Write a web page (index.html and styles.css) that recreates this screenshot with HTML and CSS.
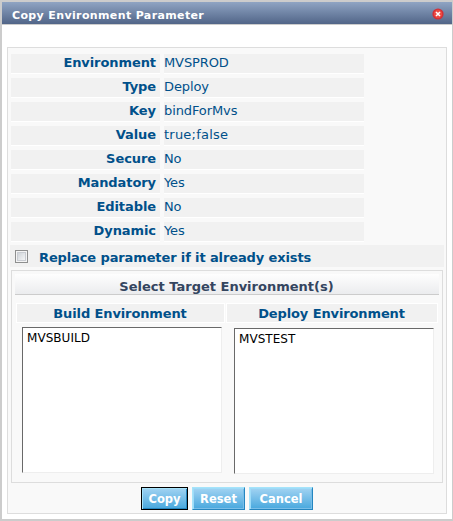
FILE: index.html
```html
<!DOCTYPE html>
<html lang="en">
<head>
<meta charset="utf-8">
<title>Copy Environment Parameter</title>
<link rel="stylesheet" href="styles.css">
</head>
<body>
<div class="window">
  <div class="titlebar">
    <span class="title">Copy Environment Parameter</span>
    <svg class="close" width="12" height="12" viewBox="0 0 12 12"><circle cx="6" cy="6" r="5.6" fill="#d03038"/><circle cx="6" cy="6" r="4.2" fill="#ee4840"/><path d="M4 4l4 4M8 4l-4 4" stroke="#fff" stroke-width="1.6"/></svg>
  </div>
  <form class="panel">
    <dl class="params">
      <dt>Environment</dt><dd>MVSPROD</dd>
      <dt>Type</dt><dd>Deploy</dd>
      <dt>Key</dt><dd>bindForMvs</dd>
      <dt>Value</dt><dd class="wide">true;false</dd>
      <dt>Secure</dt><dd>No</dd>
      <dt>Mandatory</dt><dd>Yes</dd>
      <dt>Editable</dt><dd>No</dd>
      <dt>Dynamic</dt><dd>Yes</dd>
    </dl>
    <label class="replace"><input type="checkbox" class="check"><span>Replace parameter if it already exists</span></label>
    <section class="targets">
      <h2 class="heading"><span>Select Target Environment(s)</span></h2>
      <div class="columns">
        <div class="column build">
          <h3><span>Build Environment</span></h3>
          <div class="list"><span>MVSBUILD</span></div>
        </div>
        <div class="column deploy">
          <h3><span>Deploy Environment</span></h3>
          <div class="list"><span>MVSTEST</span></div>
        </div>
      </div>
    </section>
    <div class="buttons">
      <button type="button" class="btn copy"><span>Copy</span></button>
      <button type="button" class="btn reset"><span>Reset</span></button>
      <button type="button" class="btn cancel"><span>Cancel</span></button>
    </div>
  </form>
</div>
</body>
</html>
```
FILE: styles.css
```css
* { box-sizing: border-box; }
body { margin: 0; font: 13px/18px "DejaVu Sans", sans-serif; color: #00508a; }
.window { width: 453px; height: 521px; border: 2px solid #ccc; border-right-width: 1px; background: #fff; }
.titlebar { display: flex; justify-content: space-between; height: 23px; padding: 6px 8px 0 10px; border-bottom: 1px solid #ccc; background: linear-gradient(#8fa4c3, #516588); }
.title { padding-top: 1px; font-size: 11px; line-height: 14px; font-weight: bold; letter-spacing: .37px; color: #fff; white-space: nowrap; }
.close { flex: none; }
.panel { width: 440px; height: 467px; margin: 22px 0 0 5px; padding: 6px 2px 0; border: 1px solid #ddd; background: #f9f9f9; }
.params { display: grid; grid-template-columns: 149px 200px; grid-auto-rows: 20px; gap: 4px; margin: 0 0 0 1px; }
.params dt, .params dd { margin: 0; border-bottom: 1px solid #fff; background: #f1f1f1; line-height: 18px; }
.params dt { padding-right: 4px; text-align: right; font-weight: bold; letter-spacing: -.08px; }
.params dd { letter-spacing: -.1px; }
.params .wide { letter-spacing: .22px; }
.replace { display: flex; align-items: flex-start; height: 22px; margin-top: 3px; padding: 5px 0 0 5px; background: #f1f1f1; font-weight: bold; line-height: 15px; letter-spacing: -.12px; white-space: nowrap; }
.check { appearance: none; flex: none; width: 13px; height: 13px; margin: 0 11px 0 0; border: 1px solid #8e8f8f; background: linear-gradient(135deg, #c5cad0, #fff); box-shadow: inset 0 0 0 1px #f4f4f4, inset 0 0 0 2px #c9ccd2; }
.targets { width: 432px; height: 213px; margin: 3px 0 0 1px; padding: 3px; border: 1px solid #ddd; }
.heading { height: 21px; margin: 0 0 8px; padding: 4px 1px 0 0; border-bottom: 1px solid #ccc; background: linear-gradient(#fefefe, #ebecee); color: #34455f; font-size: 13px; line-height: 18px; text-align: center; }
.columns { display: flex; gap: 1px; margin-left: 1px; }
.build { width: 209px; }
.deploy { width: 212px; }
.column h3 { height: 20px; margin: 0; padding: 1px 1px 0 0; border: 1px solid #fff; background: #f1f1f1; font-size: 13px; line-height: 18px; letter-spacing: -.12px; text-align: center; }
.list { width: 200px; height: 146px; margin: 4px 0 0 6px; padding: 3px 4px; border: 1px solid #696969; border-right-color: #eee; border-bottom-color: #eee; background: #fff; color: #000; font-size: 12px; line-height: 15px; letter-spacing: .05px; }
.deploy .list { margin: 5px 0 0 8px; }
.buttons { display: flex; gap: 4px; margin: 4px 0 0 131px; }
.btn { height: 23px; padding: 0; border: 1px solid; border-color: #a5e3fa #2586c0 #2586c0 #a5e3fa; background: linear-gradient(#a2d3f2, #48a8de); box-shadow: inset 1px 1px #9edcf8, inset -1px -1px #79bee8; color: #fff; font: bold 11.5px/20px "DejaVu Sans", sans-serif; }
.copy { width: 47px; border-color: #000; box-shadow: inset 1px 1px #a5e3fa, inset -1px -1px #2586c0; }
.reset { width: 53px; }
.cancel { width: 64px; }
```
